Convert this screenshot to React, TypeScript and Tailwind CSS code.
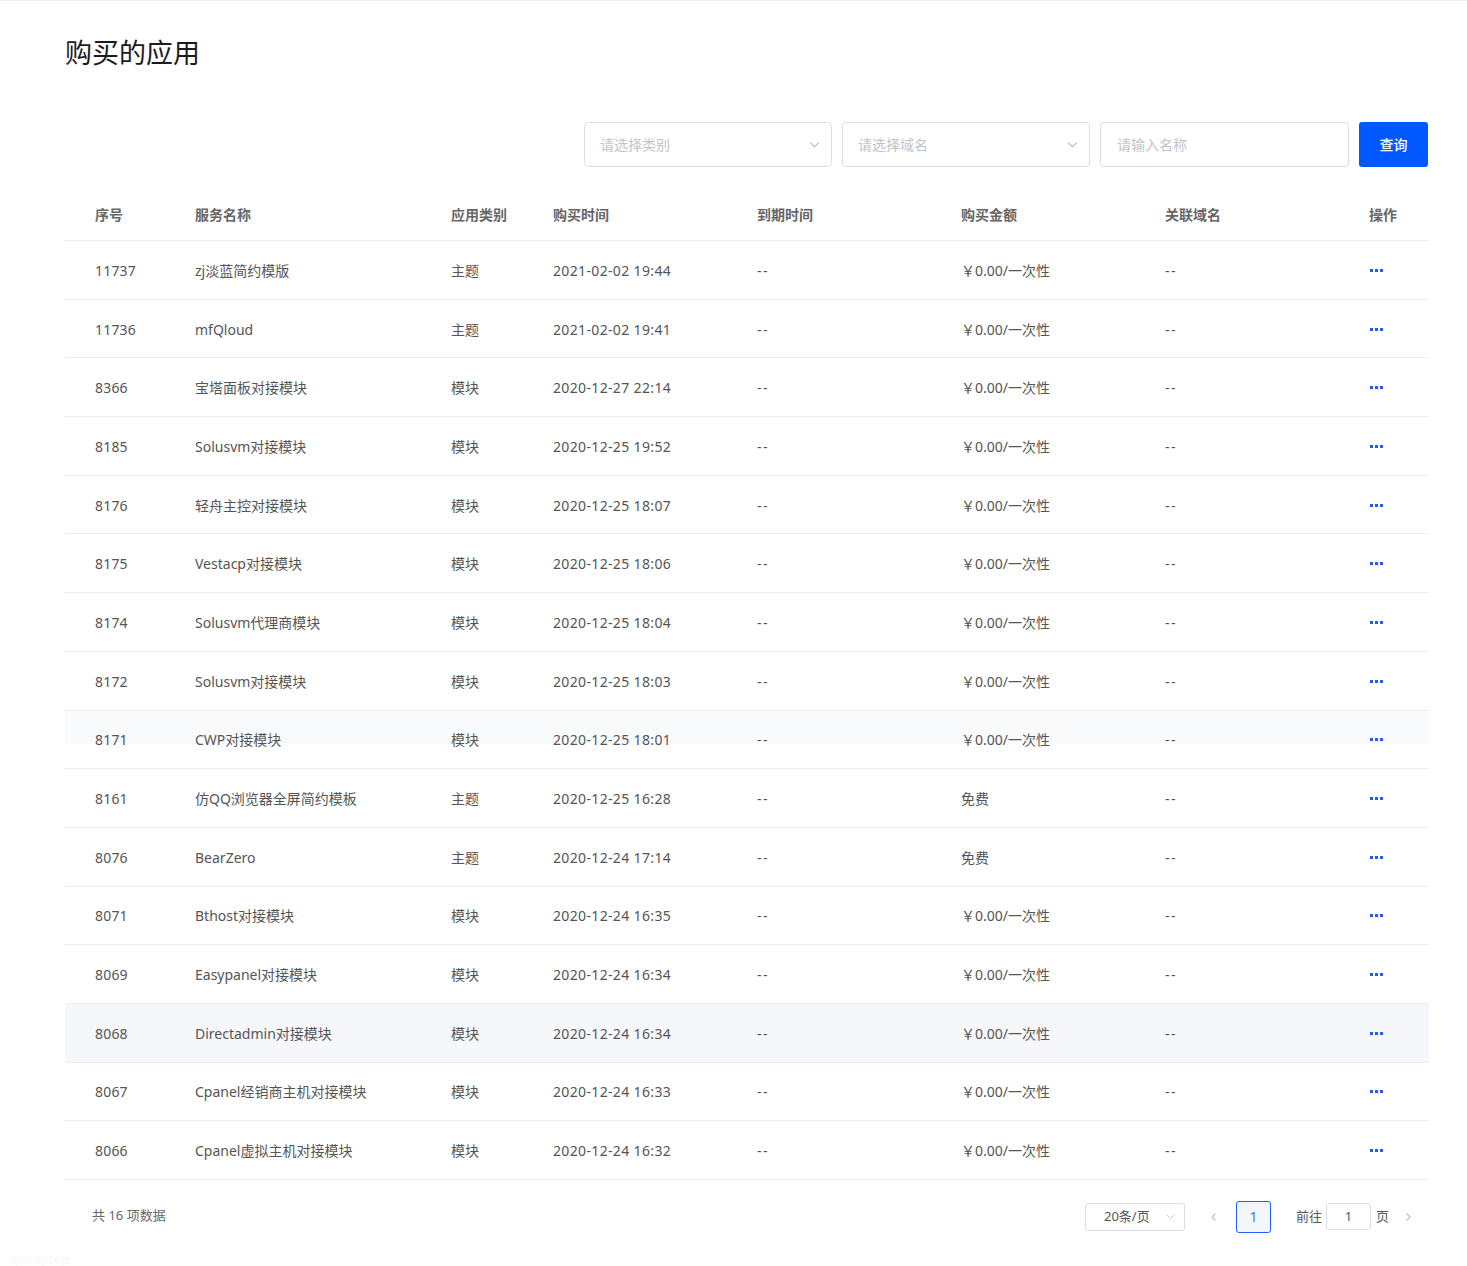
import React from "react";

type Row = {
    id: string;
    name: string;
    type: string;
    time: string;
    price: string;
    hover?: "fade" | "full";
};

const rows: Row[] = [
    { id: "11737", name: "zj淡蓝简约模版", type: "主题", time: "2021-02-02 19:44", price: "￥0.00/一次性" },
    { id: "11736", name: "mfQloud", type: "主题", time: "2021-02-02 19:41", price: "￥0.00/一次性" },
    { id: "8366", name: "宝塔面板对接模块", type: "模块", time: "2020-12-27 22:14", price: "￥0.00/一次性" },
    { id: "8185", name: "Solusvm对接模块", type: "模块", time: "2020-12-25 19:52", price: "￥0.00/一次性" },
    { id: "8176", name: "轻舟主控对接模块", type: "模块", time: "2020-12-25 18:07", price: "￥0.00/一次性" },
    { id: "8175", name: "Vestacp对接模块", type: "模块", time: "2020-12-25 18:06", price: "￥0.00/一次性" },
    { id: "8174", name: "Solusvm代理商模块", type: "模块", time: "2020-12-25 18:04", price: "￥0.00/一次性" },
    { id: "8172", name: "Solusvm对接模块", type: "模块", time: "2020-12-25 18:03", price: "￥0.00/一次性" },
    { id: "8171", name: "CWP对接模块", type: "模块", time: "2020-12-25 18:01", price: "￥0.00/一次性", hover: "fade" },
    { id: "8161", name: "仿QQ浏览器全屏简约模板", type: "主题", time: "2020-12-25 16:28", price: "免费" },
    { id: "8076", name: "BearZero", type: "主题", time: "2020-12-24 17:14", price: "免费" },
    { id: "8071", name: "Bthost对接模块", type: "模块", time: "2020-12-24 16:35", price: "￥0.00/一次性" },
    { id: "8069", name: "Easypanel对接模块", type: "模块", time: "2020-12-24 16:34", price: "￥0.00/一次性" },
    { id: "8068", name: "Directadmin对接模块", type: "模块", time: "2020-12-24 16:34", price: "￥0.00/一次性", hover: "full" },
    { id: "8067", name: "Cpanel经销商主机对接模块", type: "模块", time: "2020-12-24 16:33", price: "￥0.00/一次性" },
    { id: "8066", name: "Cpanel虚拟主机对接模块", type: "模块", time: "2020-12-24 16:32", price: "￥0.00/一次性" },
];

const Chevron = ({ className = "" }: { className?: string }) => (
    <svg viewBox="0 0 12 12" className={className} fill="none" stroke="currentColor" strokeWidth="1">
        <path d="M2 4.2 6 8l4-3.8" />
    </svg>
);

const SelectBox = ({ placeholder }: { placeholder: string }) => (
    <div className="flex h-[45px] w-[248px] items-center justify-between rounded-[4px] border border-[#dcdfe6] bg-white pl-[15px] pr-[10px]">
        <span className="text-[14px] text-[#c0c4cc]">{placeholder}</span>
        <Chevron className="h-[13px] w-[13px] text-[#b4b8c0]" />
    </div>
);

const Dots = () => (
    <div className="flex gap-[2px]">
        <span className="h-[3px] w-[3px] bg-[#1f5dff]" />
        <span className="h-[3px] w-[3px] bg-[#1f5dff]" />
        <span className="h-[3px] w-[3px] bg-[#1f5dff]" />
    </div>
);

const cols = "grid grid-cols-[100px_256px_102px_204px_204px_204px_204px_90px]";

export default function App() {
    return (
        <div
            className="min-h-[1266px] border-t border-[#f0f1f3] bg-white pl-[65px] pr-[38px] text-[#555]"
            style={{ fontFamily: '"Noto Sans", "Noto Sans CJK SC", sans-serif' }}
        >
            <h1 className="pt-[33px] text-[27px] leading-[38px] font-normal text-[#1c1c1c]">购买的应用</h1>

            {/* Filters */}
            <div className="mt-[50px] flex justify-end gap-[10px] pr-[1px]">
                <SelectBox placeholder="请选择类别" />
                <SelectBox placeholder="请选择域名" />
                <div className="flex h-[45px] w-[249px] items-center rounded-[4px] border border-[#dcdfe6] bg-white px-[16px]">
                    <span className="text-[14px] text-[#c0c4cc]">请输入名称</span>
                </div>
                <button className="h-[45px] w-[69px] rounded-[3px] bg-[#0058ff] text-[14px] font-medium text-white">
                    查询
                </button>
            </div>

            {/* Table */}
            <div className="mt-[23px]">
                <div className={`${cols} h-[51px] items-center border-b border-[#ebedf0] pb-[1px] text-[14px] font-bold text-[#666]`}>
                    <div className="pl-[30px]">序号</div>
                    <div className="pl-[30px]">服务名称</div>
                    <div className="pl-[30px]">应用类别</div>
                    <div className="pl-[30px]">购买时间</div>
                    <div className="pl-[30px]">到期时间</div>
                    <div className="pl-[30px]">购买金额</div>
                    <div className="pl-[30px]">关联域名</div>
                    <div className="pl-[30px]">操作</div>
                </div>
                {rows.map((r) => (
                    <div
                        key={r.id}
                        className={`${cols} h-[58.7px] items-center border-b border-[#ebedf0] pt-[1px] text-[14px] text-[#555] ${
                            r.hover === "full"
                                ? "bg-[#f5f7fa]"
                                : r.hover === "fade"
                                ? "bg-[linear-gradient(to_bottom,#f9fafc_0%,#f9fafc_55%,#ffffff_62%)]"
                                : "bg-white"
                        }`}
                    >
                        <div className="pl-[30px] tracking-[0.2px]">{r.id}</div>
                        <div className="pl-[30px]">{r.name}</div>
                        <div className="pl-[30px]">{r.type}</div>
                        <div className="pl-[30px] tracking-[0.35px]">{r.time}</div>
                        <div className="pl-[30px] tracking-[1.5px]">--</div>
                        <div className="pl-[30px]">{r.price}</div>
                        <div className="pl-[30px] tracking-[1.5px]">--</div>
                        <div className="pl-[31px]">
                            <Dots />
                        </div>
                    </div>
                ))}
            </div>

            {/* Footer */}
            <div className="flex h-[72px] items-center justify-between pt-[1px]">
                <span className="-mt-[2px] pl-[27px] text-[13px] text-[#666]">共 16 项数据</span>
                <div className="flex items-center pr-[15px] text-[13px] text-[#555]">
                    <div className="flex h-[28px] w-[100px] items-center justify-between rounded-[3px] border border-[#dcdfe6] pl-[18px] pr-[8px]">
                        <span>20条/页</span>
                        <Chevron className="h-[11px] w-[11px] text-[#c0c4cc]" />
                    </div>
                    <svg viewBox="0 0 12 12" className="ml-[23px] h-[12px] w-[12px] text-[#c0c4cc]" fill="none" stroke="currentColor" strokeWidth="1.3">
                        <path d="M7.5 2.5 4 6l3.5 3.5" />
                    </svg>
                    <div className="ml-[16px] flex h-[32px] w-[35px] items-center justify-center rounded-[3px] border border-[#1f5dff] bg-[#f4f6fa] text-[14px] text-[#3a7bff]">
                        1
                    </div>
                    <span className="ml-[25px]">前往</span>
                    <div className="ml-[4px] flex h-[27px] w-[45px] items-center justify-center rounded-[3px] border border-[#dcdfe6]">
                        1
                    </div>
                    <span className="ml-[5px]">页</span>
                    <svg viewBox="0 0 12 12" className="ml-[13px] h-[12px] w-[12px] text-[#c0c4cc]" fill="none" stroke="currentColor" strokeWidth="1.3">
                        <path d="M4.5 2.5 8 6l-3.5 3.5" />
                    </svg>
                </div>
            </div>
            <div className="-ml-[55px] text-[13px] leading-[14px] text-[#fdf5f5]">qning.top</div>
        </div>
    );
}
